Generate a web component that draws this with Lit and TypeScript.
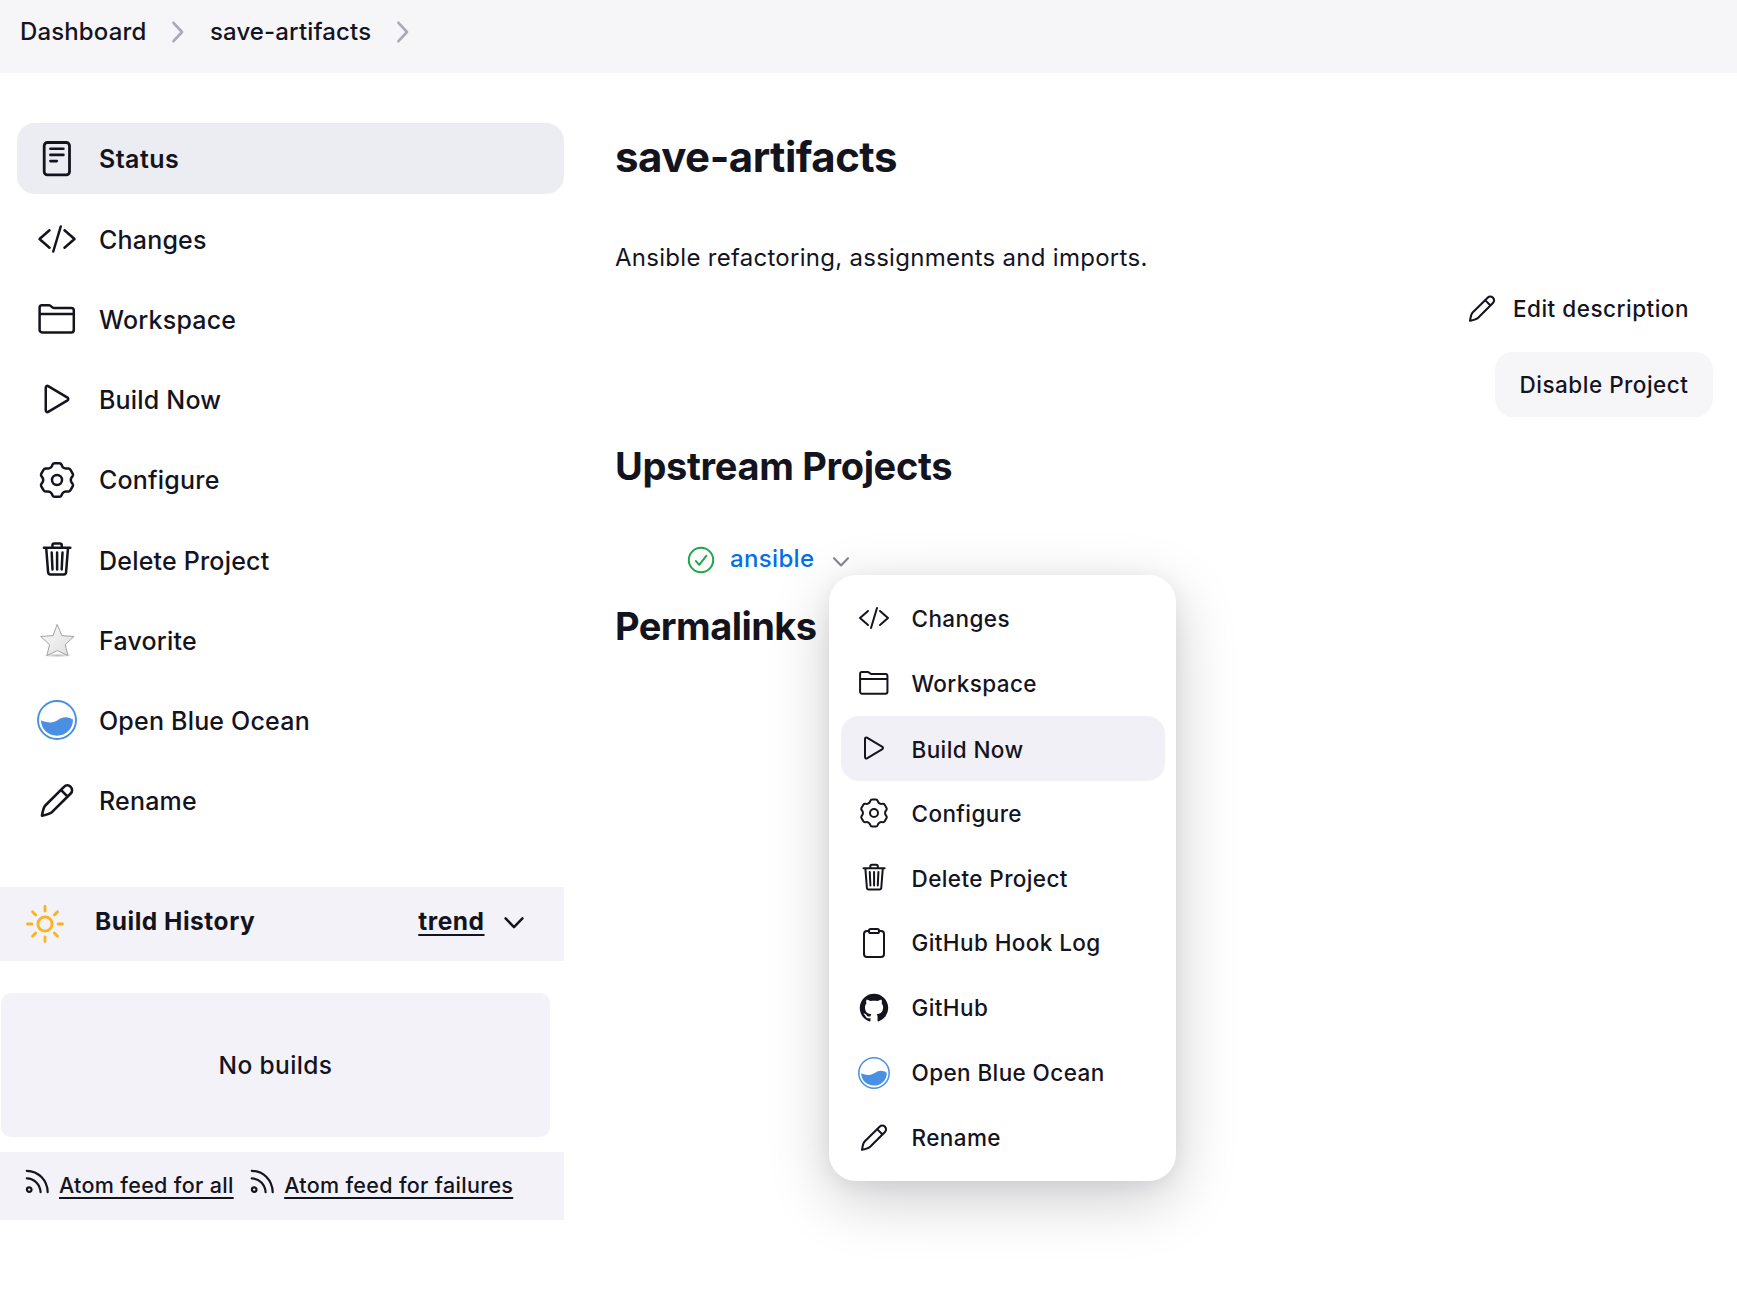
import { LitElement, html, svg, css } from "lit";
import { customElement, property } from "lit/decorators.js";

// Outline of a six-toothed cog centred in a 40-unit box, with softened corners.
function cogPath(): string {
  const pts: [number, number][] = [];
  for (let tooth = 0; tooth < 6; tooth++) {
    for (const [offset, radius] of [[-24, 13.9], [-13, 17.2], [13, 17.2], [24, 13.9]]) {
      const a = ((tooth * 60 + offset - 90) * Math.PI) / 180;
      pts.push([20 + radius * Math.cos(a), 20 + radius * Math.sin(a)]);
    }
  }
  const cut = 1.5;
  let d = "";
  pts.forEach((p, i) => {
    const prev = pts[(i + pts.length - 1) % pts.length];
    const next = pts[(i + 1) % pts.length];
    const toward = (q: [number, number]) => {
      const len = Math.hypot(q[0] - p[0], q[1] - p[1]);
      const t = Math.min(cut / len, 0.5);
      return `${(p[0] + (q[0] - p[0]) * t).toFixed(2)} ${(p[1] + (q[1] - p[1]) * t).toFixed(2)}`;
    };
    d += `${i ? "L" : "M"}${toward(prev)}Q${p[0].toFixed(2)} ${p[1].toFixed(2)} ${toward(next)}`;
  });
  return d + "z";
}

const ICONS: Record<string, { box: string; body: unknown }> = {
  status: {
    box: "0 0 40 40",
    body: svg`<g stroke-width="2.8"><rect x="7.2" y="3.5" width="25.3" height="32.4" rx="3.2"/><path d="M13.4 9.7h13M13.4 15.9h13M13.4 22.1h6.4" stroke-width="2.6"/></g>`,
  },
  code: {
    box: "0 0 512 512",
    body: svg`<path stroke-width="32" d="M160 368L32 256l128-112M352 368l128-112-128-112M304 96l-96 320"/>`,
  },
  folder: {
    box: "0 0 40 40",
    body: svg`<path stroke-width="2.5" d="M5 6.3h7.2c1.8 0 2.8 2.6 4.6 2.6h17.6a2.4 2.4 0 0 1 2.4 2.4v19.7a2.4 2.4 0 0 1-2.4 2.4H5a2.4 2.4 0 0 1-2.4-2.4V8.7A2.4 2.4 0 0 1 5 6.3zM2.6 14.9H36.8"/>`,
  },
  play: {
    box: "0 0 512 512",
    body: svg`<path stroke-width="32" d="M112 111v290c0 17.44 17 28.52 31 20.16l247.9-148.37c12.12-7.25 12.12-26.33 0-33.58L143 90.84c-14-8.36-31 2.72-31 20.16z"/>`,
  },
  gear: {
    box: "0 0 40 40",
    body: svg`<g stroke-width="2.5"><path d=${cogPath()} /><circle cx="20" cy="20" r="5"/></g>`,
  },
  trash: {
    box: "0 0 40 40",
    body: svg`<path stroke-width="2.5" d="M6.9 7.7H33.3M9.2 8l1.9 24.2a2.2 2.2 0 0 0 2.2 2.2h13.6a2.2 2.2 0 0 0 2.2-2.2L31 8M15.4 7.5V5.4a2 2 0 0 1 2-2h5.4a2 2 0 0 1 2 2V7.5M14.7 12.6l.8 16.8M20.1 12.6V29.4M25.5 12.6l-.8 16.8"/>`,
  },
  clipboard: {
    box: "0 0 512 512",
    body: svg`<path stroke-width="32" d="M336 64h32a48 48 0 0148 48v320a48 48 0 01-48 48H144a48 48 0 01-48-48V112a48 48 0 0148-48h32"/><rect stroke-width="32" x="176" y="32" width="160" height="64" rx="26"/>`,
  },
  github: {
    box: "-1 -1 18 18",
    body: svg`<path fill="currentColor" stroke="none" d="M8 0C3.58 0 0 3.58 0 8c0 3.54 2.29 6.53 5.47 7.59.4.07.55-.17.55-.38 0-.19-.01-.82-.01-1.49-2.01.37-2.53-.49-2.69-.94-.09-.23-.48-.94-.82-1.13-.28-.15-.68-.52-.01-.53.63-.01 1.08.58 1.23.82.72 1.21 1.87.87 2.33.66.07-.52.28-.87.51-1.07-1.78-.2-3.64-.89-3.64-3.95 0-.87.31-1.59.82-2.15-.08-.2-.36-1.02.08-2.12 0 0 .67-.21 2.2.82.64-.18 1.32-.27 2-.27s1.36.09 2 .27c1.53-1.04 2.2-.82 2.2-.82.44 1.1.16 1.92.08 2.12.51.56.82 1.27.82 2.15 0 3.07-1.87 3.75-3.65 3.95.29.25.54.73.54 1.48 0 1.07-.01 1.93-.01 2.2 0 .21.15.46.55.38A8.01 8.01 0 0016 8c0-4.42-3.58-8-8-8z"/>`,
  },
  star: {
    box: "0 0 40 40",
    body: svg`<defs><linearGradient id="sg" x1="0" y1="0" x2="1" y2="1"><stop offset="0" stop-color="#fafafa"/><stop offset="1" stop-color="#dedede"/></linearGradient><radialGradient id="sh"><stop offset="0" stop-color="#000" stop-opacity=".28"/><stop offset="1" stop-color="#000" stop-opacity="0"/></radialGradient></defs>
      <ellipse cx="20.4" cy="35.4" rx="15" ry="2" fill="url(#sh)" stroke="none"/>
      <path fill="url(#sg)" stroke="#8d8d8d" stroke-width=".8" stroke-linejoin="miter" d="M20.3 4.8L24.9 15.6 37 16.5 28.2 24.6 31 35.6 20.3 30.6 9.9 35.6 12.5 24.6 3.7 16.5 15.7 15.6z"/>`,
  },
  ocean: {
    box: "0 0 40 40",
    body: svg`<circle cx="20" cy="20" r="19" stroke="#4a90e2" stroke-width="1.9"/><path fill="#4a90e2" stroke="none" d="M4 20.3C8 22 11.5 23 15.5 22.2C21 21 23 17.3 28.5 17.2C31.5 17.2 34 18.3 36 19.6C36 29 29 35.7 20 35.7C11 35.7 4 29 4 20.3z"/>`,
  },
  pencil: {
    box: "0 0 40 40",
    body: svg`<path stroke-width="2.6" d="M27 5.8a4.7 4.7 0 0 1 6.7 6.7L15.2 30.9C13 33 5 34.8 5 34.8S6.3 26.5 8.3 24.5zM23.9 8.9l6.7 6.7"/>`,
  },
  sun: {
    box: "0 0 40 40",
    body: svg`<g stroke="#feb11b" stroke-width="2.8"><circle cx="20" cy="20" r="7.1"/><path d="M20 2.5v4.6M20 32.9v4.6M2.5 20h4.4M33.1 20h4.4M7.5 7.8l3.2 3.2M29.3 29l3.2 3.2M7.5 32.2l3.2-3.2M29.3 11l3.2-3.2"/></g>`,
  },
  rss: {
    box: "0 0 24 24",
    body: svg`<g stroke-width="2.2"><circle cx="4.2" cy="20.6" r="2.3"/><path d="M1.8 9.4C9.5 9.6 15.1 15.4 15.6 23.1M1.8 1.8C13.5 2 22.3 11.2 22.7 23.1"/></g>`,
  },
  check: {
    box: "0 0 28 28",
    body: svg`<g stroke="#1ea64b" stroke-width="2"><circle cx="14" cy="14" r="12.2"/><path d="M8.9 15.1l3.3 3.7 7.1-8.9"/></g>`,
  },
  down: { box: "0 0 20 12", body: svg`<path stroke-width="2.5" d="M1.6 1.4L10 10.2 18.4 1.4"/>` },
  right: { box: "0 0 12 22", body: svg`<path stroke-width="2.7" d="M1.5 1.8L10 11 1.5 20.2"/>` },
};

@customElement("ui-icon")
class UiIcon extends LitElement {
  @property() name = "status";
  static styles = css`
    :host { display: block; flex: none; }
    svg { display: block; width: 100%; height: 100%; fill: none; stroke: currentColor; stroke-linecap: round; stroke-linejoin: round; overflow: visible; }
  `;
  render() {
    const icon = ICONS[this.name];
    return html`<svg viewBox=${icon.box}>${icon.body}</svg>`;
  }
}

const TASKS = [
  ["status", "Status"],
  ["code", "Changes"],
  ["folder", "Workspace"],
  ["play", "Build Now"],
  ["gear", "Configure"],
  ["trash", "Delete Project"],
  ["star", "Favorite"],
  ["ocean", "Open Blue Ocean"],
  ["pencil", "Rename"],
];

const MENU = [
  ["code", "Changes"],
  ["folder", "Workspace"],
  ["play", "Build Now"],
  ["gear", "Configure"],
  ["trash", "Delete Project"],
  ["clipboard", "GitHub Hook Log"],
  ["github", "GitHub"],
  ["ocean", "Open Blue Ocean"],
  ["pencil", "Rename"],
];

@customElement("app-root")
class AppRoot extends LitElement {
  static styles = css`
    :host { display: block; min-height: 1296px; background: #fff; color: #14141f; font-family: Inter, "Liberation Sans", sans-serif; font-weight: 500; }
    * { box-sizing: border-box; }
    h1, h2, p { margin: 0; }
    .crumbs { height: 73px; padding: 0 20px 10px; background: #f6f6f9; display: flex; align-items: center; font-size: 24px; letter-spacing: 0.14px; }
    .crumbs ui-icon { width: 12px; height: 22px; color: #a9a9b9; }
    .sep { margin: 0 25.5px 0 26px; }
    .page { display: flex; }
    .side { width: 564px; flex: none; padding-top: 50px; }
    .tasks { display: flex; flex-direction: column; gap: 9.25px; padding-left: 17px; }
    .task { height: 71px; padding-left: 20px; border-radius: 18px; display: flex; align-items: center; gap: 22px; font-size: 25px; letter-spacing: 0.2px; }
    .task ui-icon { width: 40px; height: 40px; }
    .task span { padding-top: 1.6px; }
    .task.on { background: #ecedf3; font-weight: 600; letter-spacing: 0.45px; }
    .task.on span { padding-top: 0; }
    .history { margin-top: 51px; height: 74px; padding: 0 40px 7px 25px; background: #f3f2f8; display: flex; align-items: center; font-size: 24.5px; font-weight: 700; letter-spacing: 0.52px; }
    .history .sun { width: 40px; height: 40px; margin: 7px 30px 0 0; }
    .trend { margin-left: auto; }
    .history .caret { width: 20px; height: 12px; margin: 4px 0 0 19.5px; }
    .link { text-decoration: underline; text-decoration-thickness: 2px; text-underline-offset: 4px; text-decoration-skip-ink: none; }
    .empty { margin: 32px 14px 0 1px; height: 144px; border-radius: 10px; background: #f3f2f8; display: flex; align-items: center; justify-content: center; font-size: 24.5px; letter-spacing: 0.38px; }
    .feeds { margin-top: 15px; height: 68px; padding: 0 25px 2px; background: #f3f2f8; display: flex; align-items: center; font-size: 21.5px; letter-spacing: 0.32px; }
    .feeds ui-icon { width: 24px; height: 24px; margin: 0 10px 9px 0; }
    .feeds .link + ui-icon { margin-left: 16.5px; }
    .main { flex: 1; display: flex; flex-direction: column; padding: 59px 24px 0 51px; }
    h1 { font-size: 42px; line-height: 50px; font-weight: 700; letter-spacing: -0.5px; }
    h2 { font-size: 38px; line-height: 46px; font-weight: 700; letter-spacing: -0.55px; margin-top: 27px; }
    .disable + h2 { margin: 26px 0 1px; letter-spacing: -0.34px; }
    .desc { margin-top: 61px; font-size: 24px; line-height: 30px; font-weight: 400; letter-spacing: 0.28px; }
    .edit { margin-top: 15px; height: 40px; padding-right: 24px; align-self: flex-end; display: flex; align-items: center; gap: 15px; font-size: 22.5px; letter-spacing: 0.5px; }
    .edit ui-icon { width: 32px; height: 32px; margin-top: 1px; }
    .disable { margin-top: 24px; align-self: flex-end; width: 218px; height: 65px; border-radius: 18px; background: #f6f6f9; display: flex; align-items: center; justify-content: center; font-size: 22.5px; letter-spacing: 0.5px; }
    .upstream { margin-top: 50px; height: 36px; padding-left: 72px; display: flex; align-items: center; position: relative; font-size: 24px; letter-spacing: 0.35px; }
    .upstream .ok { width: 28px; height: 28px; margin: 4px 15px 0 0; }
    .upstream a { color: #0070ea; }
    .upstream .caret { width: 18px; height: 10px; margin: 8px 0 0 18px; color: #86868c; }
    .menu { position: absolute; z-index: 2; left: 214px; top: 35px; width: 347px; padding: 11px 11px 11px 12px; border-radius: 27px; background: #fff; box-shadow: 0 18px 62px rgba(0, 0, 20, 0.2), 0 4px 20px rgba(0, 0, 20, 0.06); }
    .item { height: 64.9px; padding-left: 17px; border-radius: 18px; display: flex; align-items: center; gap: 21.5px; font-size: 22.5px; letter-spacing: 0.4px; }
    .item ui-icon { width: 32px; height: 32px; }
    .item.on { background: #f1f0f7; }
    .item.on span { padding-top: 2px; }
  `;

  render() {
    return html`
      <nav class="crumbs">
        <span>Dashboard</span><ui-icon class="sep" name="right"></ui-icon>
        <span>save-artifacts</span><ui-icon class="sep" name="right"></ui-icon>
      </nav>
      <div class="page">
        <aside class="side">
          <div class="tasks">
            ${TASKS.map(([i, t], n) => html`<div class="task ${n === 0 ? "on" : ""}"><ui-icon name=${i}></ui-icon><span>${t}</span></div>`)}
          </div>
          <div class="history">
            <ui-icon class="sun" name="sun"></ui-icon><span>Build History</span>
            <span class="trend link">trend</span><ui-icon class="caret" name="down"></ui-icon>
          </div>
          <div class="empty"><span>No builds</span></div>
          <div class="feeds">
            <ui-icon name="rss"></ui-icon><span class="link">Atom feed for all</span>
            <ui-icon name="rss"></ui-icon><span class="link">Atom feed for failures</span>
          </div>
        </aside>
        <main class="main">
          <h1>save-artifacts</h1>
          <p class="desc">Ansible refactoring, assignments and imports.</p>
          <div class="edit"><ui-icon name="pencil"></ui-icon><span>Edit description</span></div>
          <div class="disable"><span>Disable Project</span></div>
          <h2>Upstream Projects</h2>
          <div class="upstream">
            <ui-icon class="ok" name="check"></ui-icon><a>ansible</a><ui-icon class="caret" name="down"></ui-icon>
            <div class="menu">
              ${MENU.map(([i, t], n) => html`<div class="item ${n === 2 ? "on" : ""}"><ui-icon name=${i}></ui-icon><span>${t}</span></div>`)}
            </div>
          </div>
          <h2>Permalinks</h2>
        </main>
      </div>
    `;
  }
}
